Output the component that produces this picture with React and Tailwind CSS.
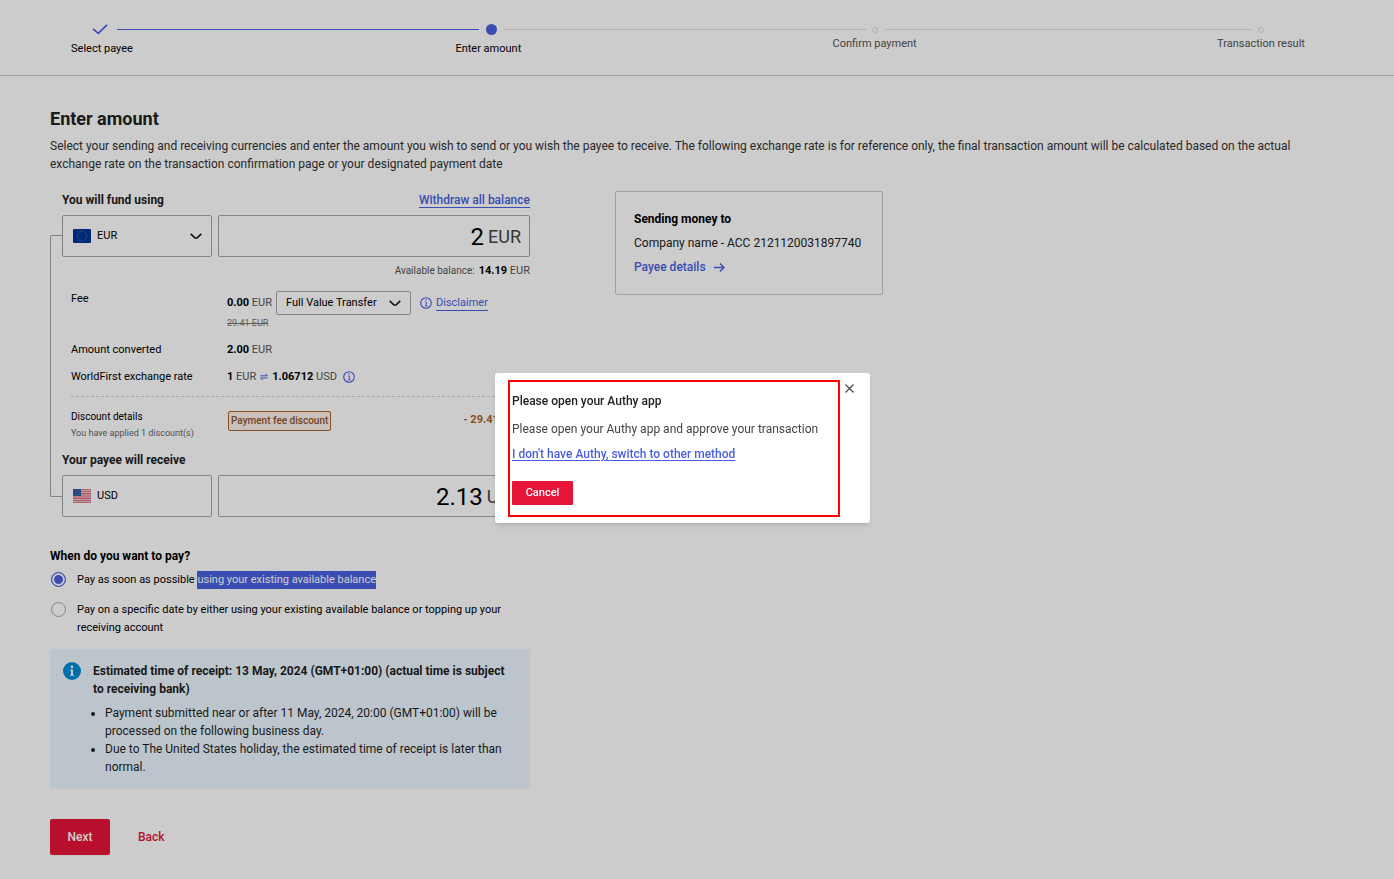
import { useState } from 'react';

const EuFlag = () => (
  <svg width="18" height="14" viewBox="0 0 18 14" aria-hidden="true">
    <rect width="18" height="14" rx="1" fill="#003399" />
    <circle cx="9" cy="7" r="4.8" fill="none" stroke="#b9b45a" strokeWidth=".8" strokeDasharray="0.8 1.713" />
  </svg>
);

const UsFlag = () => (
  <svg width="18" height="14" viewBox="0 0 18 14" aria-hidden="true">
    <rect width="18" height="14" rx="1" fill="#f3e3e6" />
    <path d="M0 .7h18M0 2.8h18M0 4.9h18M0 7h18M0 9.1h18M0 11.2h18M0 13.3h18" stroke="#d8566c" strokeWidth="1.1" />
    <rect width="8" height="7" fill="#2c5a9c" />
    <path d="M1 1.5h6M1 3.5h6M1 5.5h6" stroke="#7d9cc8" strokeWidth=".5" strokeDasharray=".7 .9" />
  </svg>
);

const Chevron = () => (
  <svg width="12" height="7" viewBox="0 0 12 7" fill="none" stroke="#1a1a1a" strokeWidth="1.6" aria-hidden="true">
    <path d="M.7.9 4.6 4.6Q6 5.8 7.4 4.6L11.3.9" />
  </svg>
);

const InfoOutline = () => (
  <svg width="12" height="12" viewBox="0 0 12 12" fill="none" stroke="#4a5fe0" aria-hidden="true">
    <circle cx="6" cy="6" r="5.3" strokeWidth="1.1" />
    <path d="M5 5h1.3v3.7M4.7 8.9h3" strokeWidth=".9" />
    <circle cx="6" cy="3.1" r=".75" fill="#4a5fe0" stroke="none" />
  </svg>
);

const Swap = () => (
  <svg width="8" height="8" viewBox="0 0 8 8" fill="none" stroke="#4a5fe0" strokeWidth="1" aria-hidden="true">
    <path d="M.5 2.8h7L5.3.8M7.5 5H.5l2.2 2" />
  </svg>
);

const steps = [
  { label: 'Select payee', state: 'done' },
  { label: 'Enter amount', state: 'current' },
  { label: 'Confirm payment', state: 'todo' },
  { label: 'Transaction result', state: 'todo' }
];

const StepIcon = ({ state }) => {
  if (state === 'done') {
    return (
      <div className="w-[60px] pr-[9px] flex justify-end">
        <svg width="16" height="11" viewBox="0 0 16 11" fill="none" stroke="#4a5fe0" aria-hidden="true">
          <path d="M1 4.8 6.3 9.3 15 .8" strokeWidth="1.7" />
        </svg>
      </div>
    );
  }
  if (state === 'current') {
    return (
      <div className="w-[60px] pr-1.5 flex justify-end">
        <span className="size-[11px] rounded-full bg-[#4a5fe0]" />
      </div>
    );
  }
  return (
    <div className="w-[55px] pr-[7px] flex justify-end">
      <span className="size-1.5 rounded-full border border-[#dedede]" />
    </div>
  );
};

const Stepper = () => (
  <header className="border-b border-[#c8c8c8] pt-6 pb-[17px] pl-[57px] pr-[88px]">
    <ol className="flex">
      {steps.map((step, i) => {
        const last = i === steps.length - 1;
        return (
          <li key={step.label} className={last ? 'w-[90px]' : 'flex-1 min-w-0'}>
            <div className="flex items-center h-[11px]">
              <StepIcon state={step.state} />
              {!last && (
                <div className={`flex-1 h-px -mr-9 ${step.state === 'done' ? 'bg-[#4a5fe0]' : 'bg-[#e2e2e2]'}`} />
              )}
            </div>
            <p
              className={`w-[90px] text-center text-[11px] leading-[18px] whitespace-nowrap ${
                step.state === 'todo' ? 'text-[#555555]' : 'text-black pt-[5px]'
              }`}
            >
              {step.label}
            </p>
          </li>
        );
      })}
    </ol>
  </header>
);

const AmountField = ({ id, label, value, onChange, currency }) => (
  <div className="flex-1 min-w-0 h-[42px] flex items-center gap-1 pt-0.5 pr-2 border border-[#a6a6a6] rounded-xs">
    <input
      id={id}
      aria-label={label}
      value={value}
      onChange={e => onChange(e.target.value)}
      className="flex-1 min-w-0 text-right text-2xl text-black bg-transparent focus:outline-none"
    />
    <span className="text-lg text-[#444444]">{currency}</span>
  </div>
);

const Calculator = () => {
  const [currency, setCurrency] = useState('EUR');
  const [send, setSend] = useState('2');
  const [receive, setReceive] = useState('2.13');

  return (
    <div className="flex">
      <div className="w-3 mt-11 mb-5 border-l border-y border-[#a6a6a6] rounded-l-xs" />
      <div className="flex-1 min-w-0">
        <div className="flex justify-between text-xs leading-[18px]">
          <label htmlFor="send-currency" className="font-bold">You will fund using</label>
          <a href="#withdraw" className="h-[17px] font-medium text-[#4a5fe0] border-b border-[#4a5fe0]">
            Withdraw all balance
          </a>
        </div>
        <div className="flex gap-1.5 mt-1.5">
          <div className="relative w-[150px]">
            <select
              id="send-currency"
              value={currency}
              onChange={e => setCurrency(e.target.value)}
              className="w-full h-[42px] pl-[34px] appearance-none border border-[#a6a6a6] rounded-xs text-[11px] text-black"
            >
              <option value="EUR">EUR</option>
            </select>
            <span className="absolute left-[11px] top-3.5 pointer-events-none"><EuFlag /></span>
            <span className="absolute right-2.5 top-[18px] pointer-events-none"><Chevron /></span>
          </div>
          <AmountField id="send" label="Amount to send" value={send} onChange={setSend} currency="EUR" />
        </div>
        <p className="mt-[5px] text-right text-[11px] leading-[18px] text-[#555555]">
          <span className="text-[10px] mr-1">Available balance:</span>
          <b className="text-black">14.19</b> EUR
        </p>

        <div className="pl-[9px] text-[11px] leading-[18px] text-black">
          <div className="flex mt-[9px]">
            <label htmlFor="fee-type" className="w-[156px] pt-px">Fee</label>
            <div className="pt-0.5">
              <div className="flex items-center h-6">
                <span className="text-[#555555]"><b className="text-black">0.00</b> EUR</span>
                <div className="relative ml-1 w-[135px]">
                  <select
                    id="fee-type"
                    className="w-full h-6 pl-[9px] appearance-none border border-[#a6a6a6] rounded-xs text-[11px] text-black"
                  >
                    <option>Full Value Transfer</option>
                  </select>
                  <span className="absolute right-2.5 top-[9px] pointer-events-none"><Chevron /></span>
                </div>
                <span className="ml-[9px] mr-1"><InfoOutline /></span>
                <a href="#disclaimer" className="h-4 leading-4 text-[#4a5fe0] border-b border-[#4a5fe0]">Disclaimer</a>
              </div>
              <p className="text-[9px] leading-4 text-[#777777] line-through">29.41 EUR</p>
            </div>
          </div>
          <div className="flex mt-2.5">
            <span className="w-[156px]">Amount converted</span>
            <span className="text-[#555555]"><b className="text-black">2.00</b> EUR</span>
          </div>
          <div className="flex mt-[9px]">
            <span className="w-[156px]">WorldFirst exchange rate</span>
            <span className="flex items-center gap-1 text-[#555555]">
              <span><b className="text-black">1</b> EUR</span>
              <Swap />
              <span><b className="text-black">1.06712</b> USD</span>
              <span className="ml-0.5"><InfoOutline /></span>
            </span>
          </div>
          <div className="mt-2.5 border-t border-dashed border-[#d0d0d0]" />
          <div className="flex mt-[11px]">
            <div className="w-[157px]">
              <p className="text-[10px]">Discount details</p>
              <p className="text-[9px] leading-3.5 text-[#666666]">You have applied 1 discount(s)</p>
            </div>
            <span className="mt-[3px] h-5 px-0.5 border border-[#a8632b] rounded-xs bg-[#fdf0ea] text-[10px] font-medium text-[#8f5530]">
              Payment fee discount
            </span>
            <span className="mt-[3px] ml-auto pr-2 font-bold text-[#a8632b]">- 29.41 EUR</span>
          </div>
        </div>

        <p className="mt-[11px] text-xs leading-[18px] font-bold">Your payee will receive</p>
        <div className="flex gap-1.5 mt-1.5">
          <div className="w-[150px] h-[42px] pl-2.5 flex items-center gap-1.5 border border-[#a6a6a6] rounded-xs text-[11px] text-black">
            <UsFlag />
            <span>USD</span>
          </div>
          <AmountField id="receive" label="Amount to receive" value={receive} onChange={setReceive} currency="USD" />
        </div>
      </div>
    </div>
  );
};

const PayWhen = () => {
  const [when, setWhen] = useState('asap');
  const radio =
    'shrink-0 size-[15px] mt-px appearance-none rounded-full border border-[#a6a6a6] checked:border-[#4a5fe0] checked:bg-[#4a5fe0] checked:shadow-[inset_0_0_0_2px_white]';

  return (
    <fieldset className="mt-[30px] text-[11px] leading-[18px] text-black">
      <legend className="text-xs leading-[18px] font-bold">When do you want to pay?</legend>
      <label className="flex gap-[11px] mt-1.5 pl-px">
        <input type="radio" name="when" checked={when === 'asap'} onChange={() => setWhen('asap')} className={radio} />
        <span>
          Pay as soon as possible{' '}
          <mark className="inline-block bg-[#4a5fe0] text-white">using your existing available balance</mark>
        </span>
      </label>
      <label className="flex gap-[11px] mt-3 pl-px">
        <input type="radio" name="when" checked={when === 'date'} onChange={() => setWhen('date')} className={radio} />
        <span>Pay on a specific date by either using your existing available balance or topping up your receiving account</span>
      </label>
    </fieldset>
  );
};

const ReceiptNotice = () => (
  <section className="mt-3 flex gap-3 py-[13px] pl-[13px] pr-5 rounded-xs bg-[#ecf7ff] text-xs leading-[18px] text-[#1f1f1f]">
    <svg width="18" height="18" viewBox="0 0 18 18" className="shrink-0" aria-hidden="true">
      <circle cx="9" cy="9" r="9" fill="#008cd6" />
      <circle cx="9" cy="4.9" r="1.3" fill="#fff" />
      <path d="M7 7.5h3v5.3h1v1H7v-1h1v-4.3H7z" fill="#fff" />
    </svg>
    <div>
      <p className="font-bold">
        Estimated time of receipt: 13 May, 2024 (GMT+01:00) (actual time is subject to receiving bank)
      </p>
      <ul className="mt-1.5 pl-3 list-disc">
        <li>Payment submitted near or after 11 May, 2024, 20:00 (GMT+01:00) will be processed on the following business day.</li>
        <li>Due to The United States holiday, the estimated time of receipt is later than normal.</li>
      </ul>
    </div>
  </section>
);

const PayeeCard = () => (
  <aside className="w-[268px] px-[18px] py-[18px] border border-[#c8c8c8] rounded-xs text-xs leading-[18px] text-black">
    <h2 className="font-bold">Sending money to</h2>
    <p className="mt-1.5 text-[#222222] whitespace-nowrap">Company name - ACC 2121120031897740</p>
    <a href="#payee" className="mt-1.5 flex items-center gap-2 font-medium text-[#4a5fe0]">
      Payee details
      <svg width="11" height="9" viewBox="0 0 11 9" fill="none" stroke="#4a5fe0" strokeWidth="1.4" aria-hidden="true">
        <path d="M0 4.500h10M6 .6l4 3.900-4 3.900" />
      </svg>
    </a>
  </aside>
);

const AuthyDialog = ({ onClose }) => (
  <div className="fixed inset-0 flex items-center justify-center pt-[17px] pr-[29px] bg-black/20">
    <div
      role="dialog"
      aria-modal="true"
      aria-labelledby="authy-title"
      className="w-[375px] flex items-start gap-[5px] pt-[7px] pb-1.5 pl-[13px] bg-white rounded-[3px] shadow-md"
    >
      <div className="w-[332px] pt-[10px] pb-[10px] pl-[2px] border-2 border-[#ff0000] text-xs leading-[18px]">
        <h2 id="authy-title" className="font-medium text-[#222222]">Please open your Authy app</h2>
        <p className="mt-2.5 text-[#444444]">Please open your Authy app and approve your transaction</p>
        <a href="#other" className="block mt-[7px] font-medium text-[#4a5fe0] underline underline-offset-2">
          I don't have Authy, switch to other method
        </a>
        <button
          type="button"
          onClick={onClose}
          className="block mt-[18px] w-[61px] h-6 rounded-[1px] bg-[#e61538] text-[11px] font-medium text-white"
        >
          Cancel
        </button>
      </div>
      <button type="button" aria-label="Close" onClick={onClose} className="mt-1">
        <svg width="9" height="9" viewBox="0 0 9 9" stroke="#444444" strokeWidth="1.1" aria-hidden="true">
          <path d="M.5.5l8 8M8.5.5l-8 8" />
        </svg>
      </button>
    </div>
  </div>
);

export default function App() {
  const [showDialog, setShowDialog] = useState(true);

  return (
    <div className="min-h-screen bg-white font-[Roboto,sans-serif] text-[#222222]">
      <Stepper />
      <main className="px-[50px] pt-[31px] pb-6">
        <h1 className="text-lg leading-6 font-bold">Enter amount</h1>
        <p className="mt-1.5 text-xs leading-[18px] text-[#333333]">
          Select your sending and receiving currencies and enter the amount you wish to send or you wish the payee to
          receive. The following exchange rate is for reference only, the final transaction amount will be calculated
          based on the actual exchange rate on the transaction confirmation page or your designated payment date
        </p>
        <div className="flex items-start gap-[85px] mt-[18px]">
          <form className="w-[480px]" onSubmit={e => e.preventDefault()}>
            <Calculator />
            <PayWhen />
            <ReceiptNotice />
            <div className="flex mt-[30px] text-xs font-medium">
              <button
                type="submit"
                onClick={() => setShowDialog(true)}
                className="w-[60px] h-9 rounded-xs bg-[#e61538] text-white shadow-xs"
              >
                Next
              </button>
              <button type="button" className="ml-7 text-[#e61538]">Back</button>
            </div>
          </form>
          <PayeeCard />
        </div>
      </main>
      {showDialog && <AuthyDialog onClose={() => setShowDialog(false)} />}
    </div>
  );
}
